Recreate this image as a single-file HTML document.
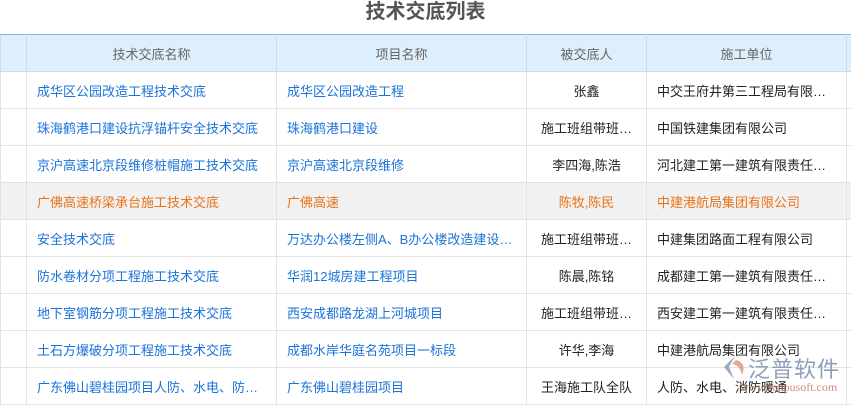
<!DOCTYPE html>
<html><head><meta charset="utf-8"><style>
*{margin:0;padding:0;box-sizing:border-box}
body{width:851px;height:400px;overflow:hidden;background:#fff;font-family:"Liberation Sans","Noto Sans CJK SC",sans-serif;font-size:13px;position:relative}
.title{position:absolute;top:0;left:0;width:851px;text-align:center;font-size:20px;font-weight:bold;color:#555;line-height:24px}
table{position:absolute;top:34px;left:0;border-collapse:collapse;table-layout:fixed;width:900px}
th,td{height:37px;border:1px solid #e3e3e3;white-space:nowrap;overflow:hidden;text-overflow:ellipsis;padding:0 10px}
th{background:#ddeefc;color:#666;font-weight:normal;border-color:#c5dcef;border-top:1px solid #7db9e8}
td{color:#222}
td.l{color:#1a73d9}
td.c{text-align:center}
tr.h td{background:#f1f1f1;color:#e8731a}
.wm{position:absolute;white-space:nowrap}
</style></head><body>
<div class="title">技术交底列表</div>
<table>
<colgroup><col style="width:26px"><col style="width:250px"><col style="width:250px"><col style="width:120px"><col style="width:200px"><col style="width:54px"></colgroup>
<tr><th></th><th>技术交底名称</th><th>项目名称</th><th>被交底人</th><th>施工单位</th><th></th></tr>
<tr><td></td><td class="l">成华区公园改造工程技术交底</td><td class="l">成华区公园改造工程</td><td class="c">张鑫</td><td>中交王府井第三工程局有限…</td><td></td></tr>
<tr><td></td><td class="l">珠海鹤港口建设抗浮锚杆安全技术交底</td><td class="l">珠海鹤港口建设</td><td class="c">施工班组带班…</td><td>中国铁建集团有限公司</td><td></td></tr>
<tr><td></td><td class="l">京沪高速北京段维修桩帽施工技术交底</td><td class="l">京沪高速北京段维修</td><td class="c">李四海,陈浩</td><td>河北建工第一建筑有限责任…</td><td></td></tr>
<tr class="h"><td></td><td>广佛高速桥梁承台施工技术交底</td><td>广佛高速</td><td class="c">陈牧,陈民</td><td>中建港航局集团有限公司</td><td></td></tr>
<tr><td></td><td class="l">安全技术交底</td><td class="l">万达办公楼左侧A、B办公楼改造建设…</td><td class="c">施工班组带班…</td><td>中建集团路面工程有限公司</td><td></td></tr>
<tr><td></td><td class="l">防水卷材分项工程施工技术交底</td><td class="l">华润12城房建工程项目</td><td class="c">陈晨,陈铭</td><td>成都建工第一建筑有限责任…</td><td></td></tr>
<tr><td></td><td class="l">地下室钢筋分项工程施工技术交底</td><td class="l">西安成都路龙湖上河城项目</td><td class="c">施工班组带班…</td><td>西安建工第一建筑有限责任…</td><td></td></tr>
<tr><td></td><td class="l">土石方爆破分项工程施工技术交底</td><td class="l">成都水岸华庭名苑项目一标段</td><td class="c">许华,李海</td><td>中建港航局集团有限公司</td><td></td></tr>
<tr><td></td><td class="l">广东佛山碧桂园项目人防、水电、防…</td><td class="l">广东佛山碧桂园项目</td><td class="c">王海施工队全队</td><td>人防、水电、消防暖通</td><td></td></tr>
</table>
<svg style="position:absolute;left:722px;top:355px" width="26" height="26" viewBox="0 0 26 26"><path d="M13 1 L2 12 L12 24 L7 12 Z" fill="#8a9ab8" opacity=".85"/><path d="M14 5 Q25 8 20 20 Q18 10 10 9 Z" fill="#e0a080" opacity=".9"/></svg>
<div class="wm" style="left:748px;top:352px;font-size:22px;color:#8a9ab8;letter-spacing:1px;opacity:.95">泛普软件</div>
<div class="wm" style="left:740px;top:380px;font-size:12px;font-family:'Liberation Serif',serif;color:#c8786a;opacity:.85">www.fanpusoft.com</div>
</body></html>
